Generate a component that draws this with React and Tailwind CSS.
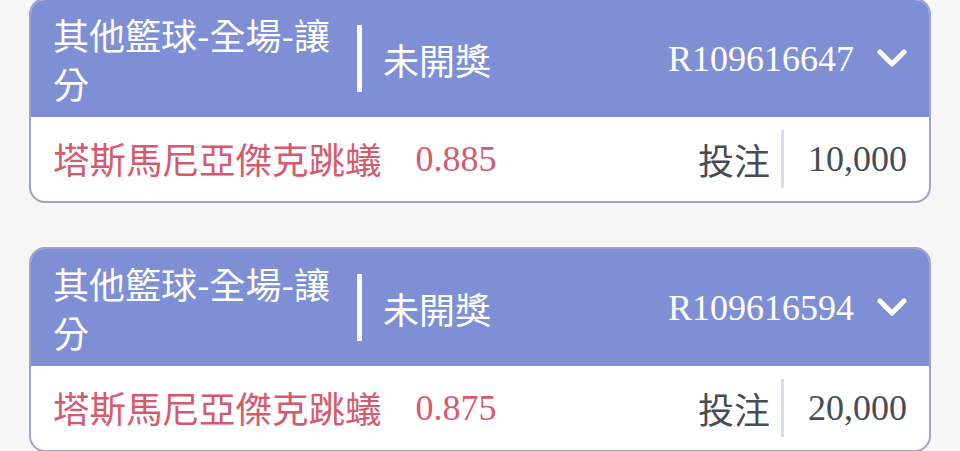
const BETS = [
  { id: "R109616647", odds: "0.885", amount: "10,000" },
  { id: "R109616594", odds: "0.875", amount: "20,000" },
];

const CJK = "font-['Noto_Sans_CJK_TC','Noto_Sans',sans-serif]";
const SERIF = "font-['Liberation_Serif','Times_New_Roman',serif]";

function Chevron() {
  return (
    <svg width="30" height="19" viewBox="0 0 30 19" className="ml-[23px] shrink-0">
      <polyline
        points="3,3 15,15 27,3"
        fill="none"
        stroke="white"
        strokeWidth="5"
        strokeLinecap="round"
        strokeLinejoin="round"
      />
    </svg>
  );
}

function BetCard({ bet }) {
  return (
    <div className="mx-[29px] border-2 border-[#9ea2cd] rounded-[16px] overflow-hidden bg-white">
      {/* header */}
      <div className="flex items-center h-[117px] px-[22px] bg-[#7f8fd6] text-white">
        <div className={`w-[304px] text-[36px] leading-[49px] ${CJK}`}>其他籃球-全場-讓分</div>
        <div className="w-[5px] h-[67px] bg-white shrink-0" />
        <div className={`ml-[21px] text-[36px] leading-none ${CJK}`}>未開獎</div>
        <div className={`ml-auto text-[36px] leading-none ${SERIF}`}>{bet.id}</div>
        <Chevron />
      </div>

      {/* body */}
      <div className="flex items-center h-[84px] px-[22px]">
        <span className={`text-[36.5px] leading-none text-[#d65a6d] ${CJK}`}>塔斯馬尼亞傑克跳蟻</span>
        <span className={`ml-[34px] text-[36px] leading-none text-[#d65a6d] ${SERIF}`}>{bet.odds}</span>
        <span className={`ml-auto text-[36px] leading-none text-[#474b57] ${CJK}`}>投注</span>
        <div className="ml-[11px] w-[3px] h-[58px] bg-[#d6dbf2]" />
        <span className={`ml-[24px] text-[36px] leading-none text-[#474b57] ${SERIF}`}>{bet.amount}</span>
      </div>
    </div>
  );
}

export default function App() {
  return (
    <div className="min-h-screen bg-[#f6f6f6] overflow-hidden">
      <div className="-mt-[2px] flex flex-col gap-[44px]">
        {BETS.map((b) => (
          <BetCard key={b.id} bet={b} />
        ))}
      </div>
    </div>
  );
}
